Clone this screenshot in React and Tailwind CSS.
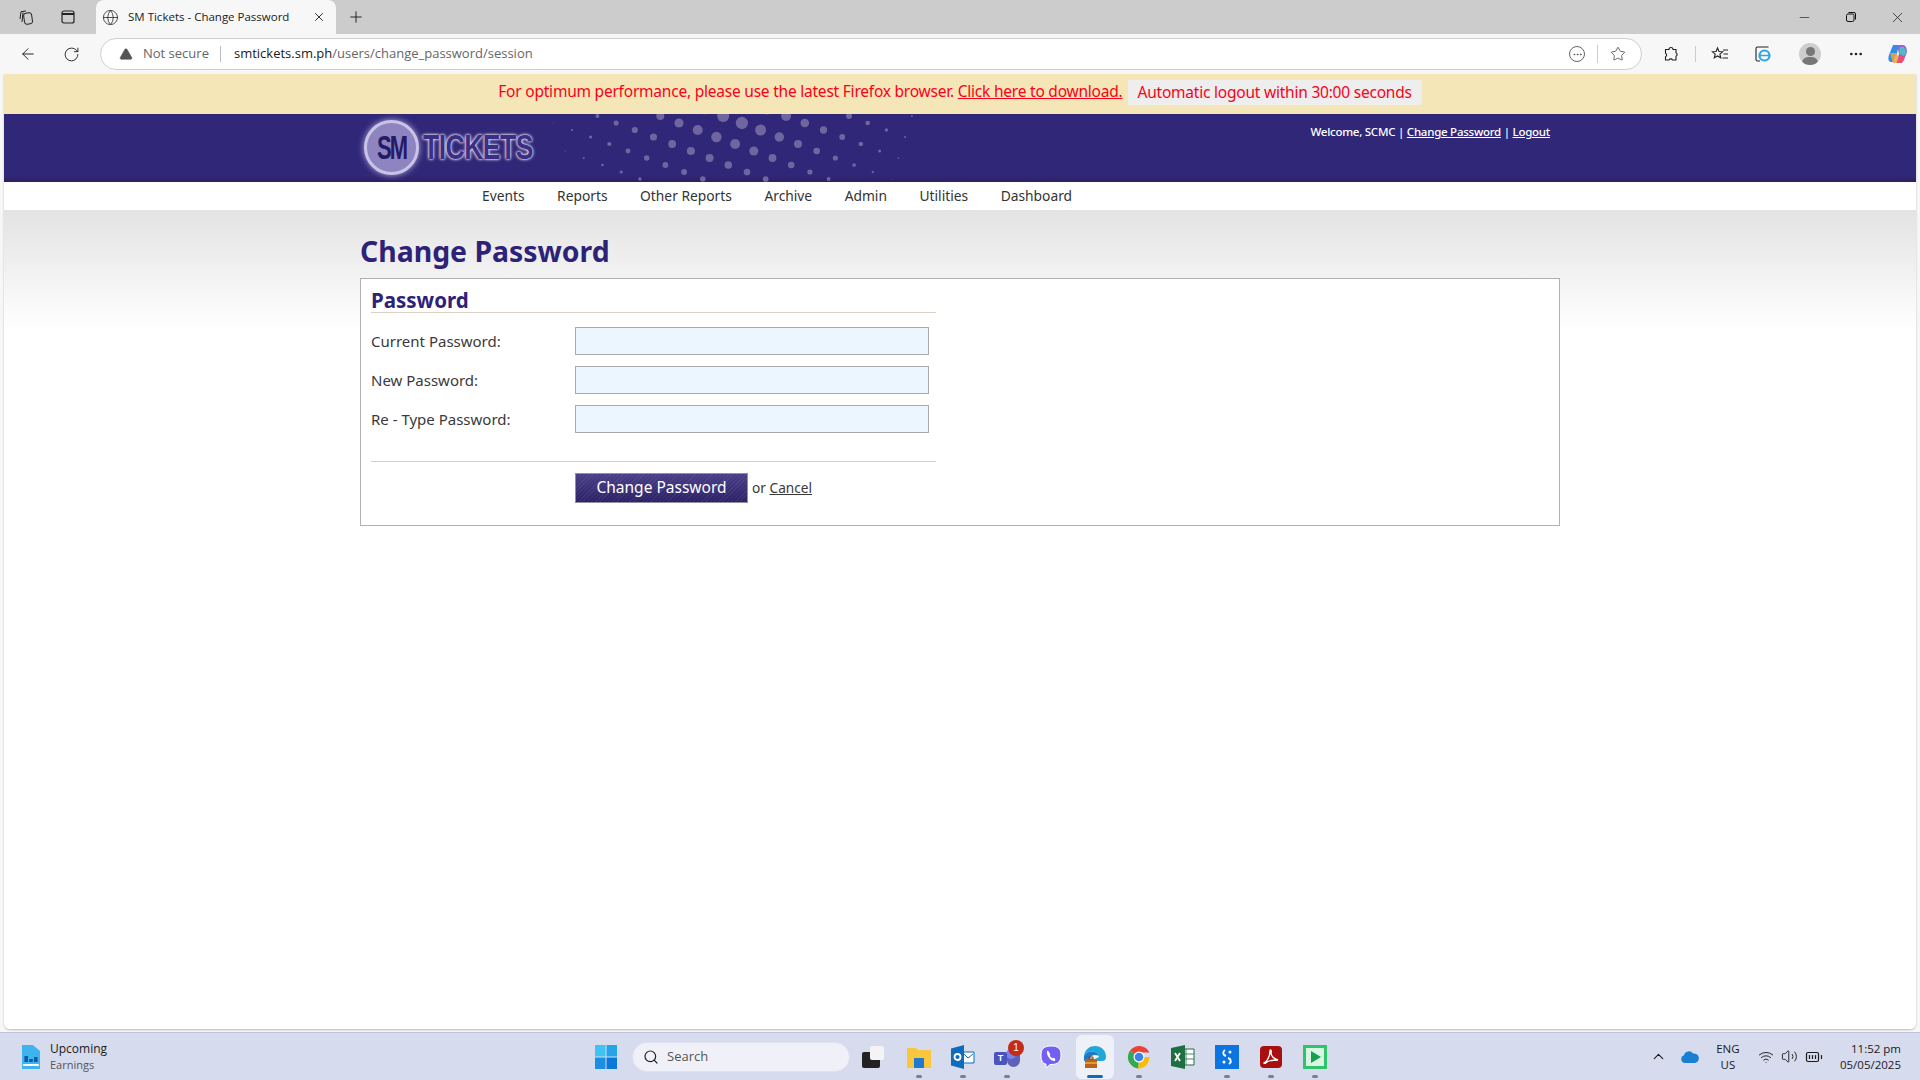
import { ArrowLeft, RotateCw, Plus, X, Minus, Globe, TriangleAlert, Star, Ellipsis, Search, ChevronUp, Wifi, Volume2, BatteryFull } from 'lucide-react'

const pageFont = "font-['Noto_Sans','Open_Sans',sans-serif]"
const chromeFont = "font-['Open_Sans','Noto_Sans',sans-serif]"

// lattice of the header's dot pattern, biggest dots near the top centre
function buildDots() {
  const dots = []
  for (let i = -16; i < 24; i++) {
    for (let j = -10; j < 16; j++) {
      const x = 679 + i * 18.7 - j * 25.5
      const y = 123 + i * 7 + j * 14
      const d = Math.sqrt((x - 738) ** 2 + ((y - 118) * 1.8) ** 2)
      const r = 6.5 - d / 31
      if (r > 0.3 && y > 108 && y < 180) dots.push({ x: x - 4, y: y - 114, r })
    }
  }
  return dots
}

function HeaderDots() {
  return (
    <svg className="absolute left-0 top-0" width="1000" height="68">
      {buildDots().map((d, i) => <circle key={i} cx={d.x} cy={d.y} r={d.r} fill="#6f659f" />)}
    </svg>
  )
}

function TabBar() {
  return (
    <div className="h-[34px] bg-[#cccccc] flex items-end">
      <div className="w-[96px] h-[34px] flex items-center text-[#222]">
        <svg className="ml-[18px]" width="16" height="16" viewBox="0 0 16 16" fill="none" stroke="currentColor" strokeWidth="1">
          <rect x="6" y="4" width="8" height="11" rx="2.5" transform="rotate(-8 10 9)" />
          <path d="M5 3.5 4 13M8 2 3 2.7 2 10" />
        </svg>
        <svg className="ml-[26px]" width="16" height="16" viewBox="0 0 16 16" fill="none" stroke="currentColor" strokeWidth="1.2">
          <rect x="2" y="2" width="12" height="12" rx="2" />
          <path d="M2 5h12" strokeWidth="2" />
        </svg>
      </div>
      <div className="w-[240px] h-[34px] bg-[#f7f7f7] rounded-t-lg flex items-center pl-[6px] pr-[6px]">
        <Globe size={17} strokeWidth={1.2} className="text-[#333]" />
        <span className={`${chromeFont} ml-[9px] text-[11.5px] text-[#222] flex-1`}>SM Tickets - Change Password</span>
        <X size={14} strokeWidth={1.6} className="text-[#222] mr-[4px]" />
      </div>
      <div className="h-[34px] flex items-center ml-[11px]">
        <Plus size={18} strokeWidth={1.3} className="text-[#222]" />
      </div>
      <div className="flex-1" />
      <div className="h-[34px] flex items-center text-[#111]">
        <Minus size={15} strokeWidth={1} />
        <svg className="ml-[33px]" width="12" height="12" viewBox="0 0 12 12" fill="none" stroke="currentColor">
          <rect x="1.5" y="3" width="7.5" height="7.5" rx="1.5" />
          <path d="M3.5 1.5H9a1.5 1.5 0 0 1 1.5 1.5v5.500" />
        </svg>
        <X size={17} strokeWidth={1} className="ml-[32px] mr-[14px]" />
      </div>
    </div>
  )
}

function Toolbar() {
  return (
    <div className="h-[40px] bg-[#f7f7f7] flex items-center">
      <ArrowLeft size={18} strokeWidth={1.3} className="ml-[19px] text-[#222]" />
      <RotateCw size={17} strokeWidth={1.3} className="ml-[26px] text-[#222]" />
      <div className="ml-[20px] w-[1542px] h-[32px] bg-white border border-[#cfcfcf] rounded-full flex items-center">
        <TriangleAlert size={14} fill="#555" strokeWidth={1} className="ml-[18px] text-[#555]" />
        <span className={`${chromeFont} ml-[10px] text-[13px] text-[#666]`}>Not secure</span>
        <span className="ml-[11px] w-px h-[16px] bg-[#bbb]" />
        <span className={`${chromeFont} ml-[13px] text-[13px] text-[#1a1a1a]`}>smtickets.sm.ph</span>
        <span className={`${chromeFont} text-[13px] text-[#666]`}>/users/change_password/session</span>
        <div className="flex-1" />
        <div className="w-[16px] h-[16px] rounded-full border border-[#666] flex items-center justify-center">
          <Ellipsis size={11} className="text-[#555]" />
        </div>
        <span className="ml-[12px] w-px h-[18px] bg-[#ccc]" />
        <Star size={16} strokeWidth={1.2} className="ml-[12px] mr-[15px] text-[#444]" />
      </div>
      <svg className="ml-[21px]" width="16" height="16" viewBox="0 0 16 16" fill="none" stroke="#222" strokeWidth="1.1">
        <path d="M6 3.500a2 2 0 0 1 4 0h3v3.200a2 2 0 0 1 0 3.600V14H9.500a2 2 0 0 0-3.600 0H2.500v-3.200a2 2 0 0 0 0-3.600V3.500z" />
      </svg>
      <span className="ml-[16px] w-px h-[16px] bg-[#ccc]" />
      <svg className="ml-[15px]" width="18" height="16" viewBox="0 0 18 16" fill="none" stroke="#222" strokeWidth="1.1">
        <path d="M6.500 2 8 5.500l3.700.3-2.800 2.400.9 3.600L6.500 9.900 3.300 11.800l.9-3.600L1.400 5.800l3.700-.3zM12 4h5M12.500 8H17M11.500 12H17" />
      </svg>
      <svg className="ml-[25px]" width="18" height="18" viewBox="0 0 18 18" fill="none">
        <path d="M6 16H3.500A1.500 1.500 0 0 1 2 14.500v-11A1.500 1.500 0 0 1 3.500 2h11" stroke="#222" strokeWidth="1.1" />
        <circle cx="10.500" cy="10.500" r="5" stroke="#27a9e6" strokeWidth="2.200" />
        <path d="M6 10.500h9" stroke="#27a9e6" strokeWidth="1.500" />
      </svg>
      <div className="ml-[27px] w-[22px] h-[22px] rounded-full bg-[#cfcdcb] overflow-hidden relative flex justify-center">
        <span className="absolute top-[4px] w-[9px] h-[9px] rounded-full bg-[#777]" />
        <span className="absolute top-[14px] w-[16px] h-[12px] rounded-full bg-[#777]" />
      </div>
      <Ellipsis size={16} strokeWidth={2} className="ml-[27px] text-[#222]" />
      <svg className="ml-[23px]" width="22" height="22" viewBox="0 0 22 22">
        <path d="M6 2h6l-2 8-4 9H4C1 19 1 15 2 12z" fill="#2f8ee8" />
        <path d="M10 2h6c3 0 4 4 4 7l-3 8c-1 2-3 3-5 3H9l3-9z" fill="#9b5fe0" />
        <path d="M3 10h6l3 4-2 6H6z" fill="#f0a43c" opacity="0.85" />
        <path d="M13 4h4l3 6-4 3-4-3z" fill="#45c8c0" opacity="0.9" />
        <path d="M12 13h6l-3 7h-5z" fill="#ea4c7c" />
      </svg>
    </div>
  )
}

function NavBar() {
  const items = ['Events', 'Reports', 'Other Reports', 'Archive', 'Admin', 'Utilities', 'Dashboard']
  return (
    <div className="h-[28px] bg-white">
      <div className="w-[1200px] mx-auto pl-[122px] flex gap-[32.5px] h-full items-center pt-[1px]">
        {items.map(n => <span key={n} className={`${pageFont} text-[13.8px] text-[#333]`}>{n}</span>)}
      </div>
    </div>
  )
}

function Field({ label }) {
  return (
    <div className="flex items-center h-[28px] mb-[11px]">
      <label className={`${pageFont} w-[204px] text-[15px] text-[#3a3a3a]`}>{label}</label>
      <div className="w-[354px] h-[28px] border border-[#aaaaaa] bg-[#ecf6fe]" />
    </div>
  )
}

function PasswordForm() {
  return (
    <div className="h-[248px] border border-[#b0b0b0] bg-white pt-[10px] pl-[10px]">
      <div className="w-[565px]">
        <h2 className={`${pageFont} text-[#2e2278] text-[20.5px] font-bold leading-[23px] border-b border-[#dccfc4]`}>Password</h2>
        <div className="pt-[14px]">
          <Field label="Current Password:" />
          <Field label="New Password:" />
          <Field label="Re - Type Password:" />
        </div>
        <div className="mt-[28px] border-t border-[#dccfc4] pt-[11px] pl-[204px] flex items-center">
          <div className={`${pageFont} w-[173px] h-[30px] border border-[#8f8f9f] bg-[repeating-linear-gradient(135deg,rgba(255,255,255,0.06)_0_1px,transparent_1px_3px),linear-gradient(#4a3f88,#2b2166)] text-white text-[15.5px] flex items-center justify-center`}>Change Password</div>
          <span className={`${pageFont} ml-[4px] text-[13.7px] text-[#3a3a3a]`}>or <span className="underline">Cancel</span></span>
        </div>
      </div>
    </div>
  )
}

function Page() {
  return (
    <div className="flex-1 mx-[4px] bg-white rounded-b-md flex flex-col overflow-hidden shadow-[0_1px_2px_rgba(0,0,0,0.25)]">
      <div className="h-[40px] bg-[#f5e6b8] flex items-center justify-center pb-[4px]">
        <span className={`${pageFont} text-[15.5px] tracking-[-0.22px] text-[#fb0018]`}>For optimum performance, please use the latest Firefox browser. <span className="underline">Click here to download.</span></span>
        <span className={`${pageFont} ml-[5px] bg-[#eeeeee] px-[10px] h-[25px] leading-[25px] text-[15.5px] tracking-[-0.22px] text-[#fb0018]`}>Automatic logout within 30:00 seconds</span>
      </div>
      <div className="h-[68px] bg-[linear-gradient(#312779_90%,#2b2160)] relative overflow-hidden">
        <HeaderDots />
        <div className="w-[1200px] mx-auto relative h-full">
          <div className="absolute left-[4px] top-[6px] flex items-center">
            <div className="w-[55px] h-[55px] rounded-full bg-[#8d84c0] border-[3px] border-[#c9c4e6] shadow-[0_0_6px_#b5aee0] flex items-center justify-center">
              <span className="font-['Liberation_Sans',sans-serif] text-[#241a66] font-bold text-[22px] tracking-[-2px] leading-none scale-y-[1.5]">SM</span>
            </div>
            <span className="ml-[4px] font-['Liberation_Sans',sans-serif] text-[#3a2e86] text-[26.5px] tracking-[-0.5px] font-bold leading-none scale-y-[1.35] [text-shadow:0_0_3px_#fff,0_0_2px_#fff]">TICKETS</span>
          </div>
          <div className={`${pageFont} absolute right-[10px] top-[9px] text-[11.5px] tracking-[-0.25px] text-white font-medium`}>
            Welcome, SCMC | <span className="underline">Change Password</span> | <span className="underline">Logout</span>
          </div>
        </div>
      </div>
      <NavBar />
      <div className="flex-1 bg-[linear-gradient(#e3e3e3,#ffffff_120px)]">
        <div className="w-[1200px] mx-auto">
          <h1 className={`${pageFont} text-[#2e2278] text-[28.4px] font-bold h-[68px] pt-[21px] leading-[40px]`}>Change Password</h1>
          <PasswordForm />
        </div>
      </div>
    </div>
  )
}

function AppIcon({ children, active, dot }) {
  return (
    <div className="w-[44px] h-[44px] flex items-center justify-center relative">
      {active && <span className="absolute inset-y-0 inset-x-[3px] rounded-md bg-[#eff1f8]" />}
      <div className="relative flex">{children}</div>
      {dot && <span className="absolute bottom-[1px] w-[6px] h-[3px] rounded-full bg-[#7b7f8e]" />}
      {active && <span className="absolute bottom-[1px] w-[16px] h-[3px] rounded-full bg-[#0f6cbd]" />}
    </div>
  )
}

function Taskbar() {
  return (
    <div className="h-[48px] mt-[3px] bg-[#d7dbee] border-t border-[#bfc2d2] flex items-center">
      <div className="w-[584px] flex items-center pl-[22px]">
        <svg width="18" height="24" viewBox="0 0 15 24" preserveAspectRatio="none">
          <path d="M0 0h9l6 6v18H0z" fill="#3db4ee" />
          <path d="M2 11h3v6H2zM6 14h3v3H6zM10 12h3v5h-3z" fill="#0f5aa8" />
          <path d="M1 19h13v2H1z" fill="#fff" />
        </svg>
        <div className={`${chromeFont} ml-[10px] leading-[16px]`}>
          <div className="text-[12px] text-[#1a1a1a]">Upcoming</div>
          <div className="text-[11px] text-[#555]">Earnings</div>
        </div>
      </div>
      <div className="w-[44px] flex items-center justify-center">
        <svg width="22" height="24" viewBox="0 0 22 24">
          <path d="M0 0h10.500v11.500H0z" fill="#3ec3f5" />
          <path d="M11.500 0H22v11.500H11.500z" fill="#25a4ec" />
          <path d="M0 12.500h10.500V24H0z" fill="#1b90e3" />
          <path d="M11.500 12.500H22V24H11.500z" fill="#0a78d6" />
        </svg>
      </div>
      <div className="w-[218px] h-[30px] ml-[4px] rounded-full bg-[#f0f1f8] border border-[#dfe1ee] flex items-center pl-[10px]">
        <Search size={16} strokeWidth={1.8} className="text-[#222]" />
        <span className={`${chromeFont} ml-[8px] text-[13px] text-[#555]`}>Search</span>
      </div>
      <div className="flex ml-[1px]">
        <AppIcon>
          <div className="w-[22px] h-[22px] relative">
            <span className="absolute left-0 bottom-0 w-[18px] h-[16px] bg-[#222] rounded-[2px]" />
            <span className="absolute right-0 top-0 w-[14px] h-[14px] bg-[#f4f4f6] rounded-[2px]" />
          </div>
        </AppIcon>
        <div className="w-[2px]" />
        <AppIcon dot>
          <svg width="24" height="22" viewBox="0 0 24 22">
            <path d="M0 2h9l2 2h13v18H0z" fill="#f8c73e" />
            <path d="M7 12h10v10H7z" fill="#1f7ad0" />
          </svg>
        </AppIcon>
        <AppIcon dot>
          <svg width="24" height="24" viewBox="0 0 24 24">
            <path d="M12 7h11v11H12z" fill="#fff" stroke="#0f6cbd" />
            <path d="M13 9l4 4 5-4" fill="none" stroke="#0f6cbd" />
            <path d="M0 3.500 13 0v24L0 20.500z" fill="#0f6cbd" />
            <circle cx="6.500" cy="12" r="3" fill="none" stroke="#fff" strokeWidth="1.800" />
          </svg>
        </AppIcon>
        <AppIcon dot>
          <div className="w-[26px] h-[24px] relative">
            <span className="absolute right-0 top-[4px] w-[13px] h-[18px] rounded-full bg-[#5c63b8]" />
            <span className="absolute left-[12px] top-[4px] w-[10px] h-[10px] rounded-full bg-[#7b83eb]" />
            <span className="absolute left-0 top-[7px] w-[13px] h-[13px] rounded-[2px] bg-[#4b53bc] text-white text-[9px] font-bold leading-[13px] text-center font-['Liberation_Sans',sans-serif]">T</span>
            <span className="absolute -right-[4px] -top-[5px] w-[16px] h-[16px] rounded-full bg-[#c42b1c] text-white text-[10px] leading-[16px] text-center font-['Liberation_Sans',sans-serif]">1</span>
          </div>
        </AppIcon>
        <AppIcon>
          <svg width="22" height="24" viewBox="0 0 22 24">
            <path d="M11 1C4 1 1 4 1 10c0 5 1 8 5 9v4l4-3.500h1c7 0 10-3 10-9.500S18 1 11 1z" fill="#7360f2" stroke="#fff" strokeWidth="1" />
            <path d="M7 6c2-1 2 2 3 3s-1 1 0 2 2 3 3 2 3 1 2 3c-3 1-9-5-8-10z" fill="#fff" />
          </svg>
        </AppIcon>
        <AppIcon active>
          <svg width="24" height="24" viewBox="0 0 24 24">
            <path d="M1 11C2 4 7 1 12 1c6 0 11 4 11 11 0 3-2 4-4 4H10c1-3 5-2 6-5C14 5 4 5 1 11z" fill="#1ea7d7" />
            <path d="M1 11c3-6 13-6 15 0-4-2-9-1-10 4l-5 1z" fill="#1c78c9" />
            <path d="M2 14h12v9H2z" fill="#b5651d" />
            <path d="M2 17h12v2H2z" fill="#e39a2e" />
            <path d="M6 12h4v2H6z" fill="none" stroke="#7a4110" />
          </svg>
        </AppIcon>
        <AppIcon dot>
          <svg width="24" height="24" viewBox="0 0 24 24">
            <path d="M12 12 3 5.500A11.500 11.500 0 0 1 22.500 7.500H12z" fill="#ea4335" />
            <path d="M12 12h10.500A11.500 11.500 0 0 1 11 23.500z" fill="#fbbc04" />
            <path d="M12 12 11 23.500A11.500 11.500 0 0 1 3 5.500z" fill="#34a853" />
            <circle cx="12" cy="12" r="5.500" fill="#fff" />
            <circle cx="12" cy="12" r="4.300" fill="#3b82f0" />
          </svg>
        </AppIcon>
        <AppIcon>
          <svg width="24" height="24" viewBox="0 0 24 24">
            <path d="M10 4h13v16H10z" fill="#fff" stroke="#1d6f42" />
            <path d="M15 4v16M10 9h13M10 14h13" stroke="#1d6f42" strokeWidth="0.800" />
            <path d="M0 3 14 0v24L0 21z" fill="#1d6f42" />
            <path d="M4 8l5 8M9 8l-5 8" stroke="#fff" strokeWidth="1.800" />
          </svg>
        </AppIcon>
        <AppIcon dot>
          <svg width="24" height="24" viewBox="0 0 24 24">
            <path d="M0 0h24v24H0z" fill="#0b74e0" />
            <path d="M10 5C7 7 8 10 11 11M14 19c3-2 2-5-1-6" fill="none" stroke="#fff" strokeWidth="2" />
            <circle cx="15" cy="7" r="1.500" fill="#fff" />
            <circle cx="9" cy="17" r="1.500" fill="#fff" />
          </svg>
        </AppIcon>
        <AppIcon dot>
          <svg width="22" height="22" viewBox="0 0 22 22">
            <rect width="22" height="22" rx="4" fill="#a80f0f" />
            <path d="M4 17c3-1 6-7 6-12 0-2 2-1 1 2 0 3 3 6 7 7-3 0-8 0-11 2-1 1-3 2-3 1z" fill="none" stroke="#fff" strokeWidth="1.400" />
          </svg>
        </AppIcon>
        <AppIcon dot>
          <svg width="24" height="24" viewBox="0 0 24 24">
            <rect width="24" height="24" fill="#2fc46a" />
            <rect x="3" y="3" width="18" height="18" fill="#d9f5e3" />
            <path d="M8 6v12l10-6z" fill="#179e50" />
          </svg>
        </AppIcon>
      </div>
      <div className="flex-1" />
      <div className="flex items-center text-[#1a1a1a]">
        <ChevronUp size={17} strokeWidth={1.6} />
        <svg className="ml-[14px]" width="18" height="12" viewBox="0 0 18 12">
          <path d="M4 12a4 4 0 0 1-1-7.800A5 5 0 0 1 12 2.500 4.500 4.500 0 0 1 14 12z" fill="#1a7fd4" />
        </svg>
        <div className={`${chromeFont} ml-[16px] w-[26px] text-center text-[11.500px] leading-[16px]`}>ENG<br />US</div>
        <Wifi size={16} strokeWidth={1.4} className="ml-[17px]" />
        <Volume2 size={17} strokeWidth={1.3} className="ml-[7px]" />
        <BatteryFull size={18} strokeWidth={1.6} className="ml-[7px]" />
        <div className={`${chromeFont} ml-[17px] mr-[19px] text-right text-[11.500px] leading-[16px]`}>11:52 pm<br />05/05/2025</div>
      </div>
    </div>
  )
}

export default function App() {
  return (
    <div className="w-[1920px] h-[1080px] bg-[#f7f7f7] flex flex-col overflow-hidden">
      <TabBar />
      <Toolbar />
      <Page />
      <Taskbar />
    </div>
  )
}
